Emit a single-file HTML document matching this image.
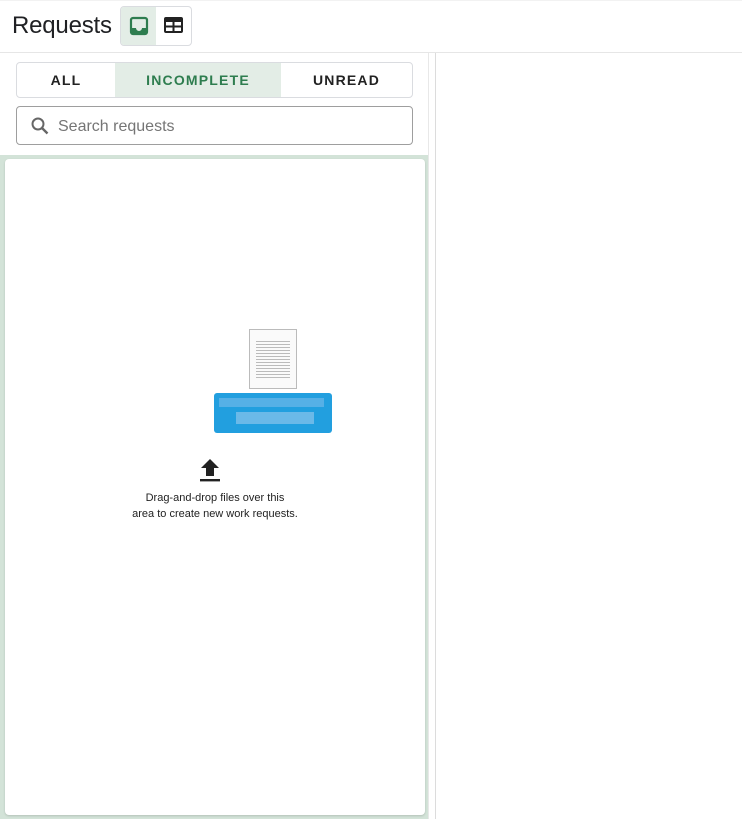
<!DOCTYPE html>
<html><head><style>
html,body{margin:0;padding:0;width:742px;height:819px;overflow:hidden;background:#fff;font-family:"Liberation Sans",Roboto,sans-serif;}
.top{position:absolute;left:0;top:0;width:742px;height:53px;border-bottom:1px solid #e6e6e6;border-top:1px solid #f2f2f2;box-sizing:border-box;}
.title{position:absolute;left:12px;top:11px;font-size:24px;color:#202124;letter-spacing:-0.2px;}
.tg{position:absolute;left:120px;top:5px;width:70px;height:38px;border:1px solid #dadce0;border-radius:4px;overflow:hidden;}
.tg .a{position:absolute;left:0;top:0;width:35px;height:38px;background:#e3ede6;}
.left{position:absolute;left:0;top:53px;width:428px;height:766px;border-right:1px solid #e8e8e8;}
.vline{position:absolute;left:435px;top:53px;width:1px;height:766px;background:#dcdcdc;}
.tabs{position:absolute;left:16px;top:9px;width:395px;height:34px;border:1px solid #dadce0;border-radius:4px;overflow:hidden;font-size:14px;font-weight:bold;letter-spacing:1.2px;}
.tabs div{position:absolute;top:0;height:34px;line-height:34px;text-align:center;}
.search{position:absolute;left:16px;top:53px;width:397px;height:39px;border:1px solid #9e9e9e;border-radius:4px;box-sizing:border-box;}
.search span{position:absolute;left:41px;top:11px;font-size:16px;color:#757575;}
.green{position:absolute;left:0;top:102px;width:428px;height:664px;background:#d3e3d8;}
.card{position:absolute;left:5px;top:4px;width:420px;height:656px;background:#fff;border-radius:4px;box-shadow:0 1px 2px rgba(0,0,0,.15);}
.txt{position:absolute;left:100px;top:331px;width:220px;text-align:center;font-size:11px;line-height:16px;color:#222;}
</style></head><body>
<div class="top">
<div class="title">Requests</div>
<div class="tg"><div class="a"></div>
<svg style="position:absolute;left:8px;top:9px" width="20" height="20" viewBox="0 0 20 20"><rect x="2" y="2" width="16" height="16" rx="2" fill="none" stroke="#2e7d4f" stroke-width="2.2"/><path d="M2 12h5a3 3 0 0 0 6 0h5v6H2z" fill="#2e7d4f"/></svg>
<svg style="position:absolute;left:43px;top:10px" width="19" height="17" viewBox="0 0 19 17"><rect x="1" y="1" width="17" height="14" rx="1" fill="none" stroke="#222" stroke-width="2"/><rect x="1" y="1" width="17" height="4" fill="#222"/><path d="M1 9.5h17M9.5 5v10" stroke="#222" stroke-width="2"/></svg>
</div>
</div>
<div class="left">
<div class="tabs">
<div style="left:0;width:98px;color:#222">ALL</div>
<div style="left:98px;width:166px;background:#e3ede6;color:#2e7d4f">INCOMPLETE</div>
<div style="left:264px;width:131px;color:#222">UNREAD</div>
</div>
<div class="search">
<svg style="position:absolute;left:13px;top:9px" width="20" height="20" viewBox="0 0 20 20"><circle cx="8" cy="8" r="5.5" fill="none" stroke="#666" stroke-width="2"/><path d="M12 12l5.5 5.5" stroke="#666" stroke-width="2.4"/></svg>
<span>Search requests</span></div>
<div class="green"><div class="card">
<div style="position:absolute;left:244px;top:170px;width:46px;height:58px;border:1px solid #bbb;background:#fafafa"><div style="margin:9px 6px;height:40px;background:repeating-linear-gradient(#fafafa 0 2px,#bbb 2px 3px)"></div></div>
<div style="position:absolute;left:209px;top:234px;width:118px;height:40px;background:#229fdf;border-radius:3px"><div style="position:absolute;left:5px;top:5px;width:105px;height:9px;background:#56b0e6"></div><div style="position:absolute;left:22px;top:19px;width:78px;height:12px;background:#6bb9e8"></div></div>
<svg style="position:absolute;left:193px;top:298px" width="24" height="26" viewBox="0 0 24 26"><path d="M12 2L3 11h5v8h8v-8h5z" fill="#222"/><rect x="2" y="22" width="20" height="2.4" fill="#222"/></svg>
<div class="txt">Drag-and-drop files over this<br>area to create new work requests.</div>
</div></div>
</div>
<div class="vline"></div>
</body></html>
